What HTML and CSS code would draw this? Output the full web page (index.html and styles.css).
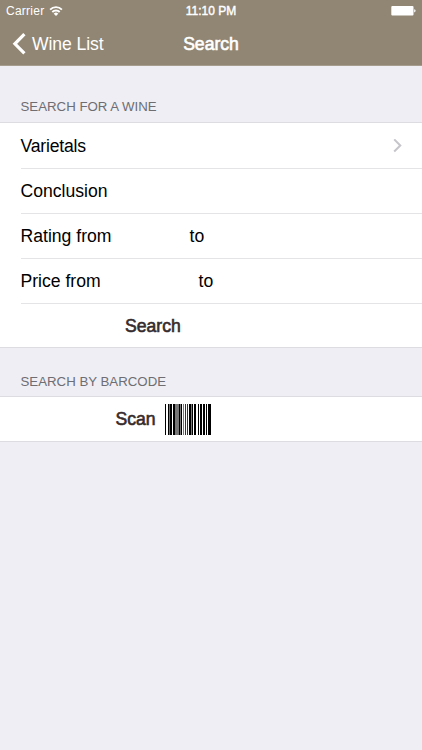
FILE: index.html
```html
<!DOCTYPE html>
<html lang="en">
<head>
<meta charset="utf-8">
<title>Search</title>
<link rel="stylesheet" href="styles.css">
</head>
<body>
<header class="top">
  <div class="status">
    <div class="carrier"><span>Carrier</span>
      <svg class="wifi" width="14" height="11" viewBox="0 0 14 11"><g fill="none" stroke="#fff" stroke-width="1.9"><path d="M1.1 3.6a8.3 8.3 0 0 1 11.8 0"/><path d="M3.3 6a5.2 5.2 0 0 1 7.4 0"/></g><path fill="#fff" d="M4.7 7.7a3.2 3.2 0 0 1 4.6 0L7 10z"/></svg>
    </div>
    <span class="clock">11:10 PM</span>
    <svg class="battery" width="26" height="12" viewBox="0 0 26 12"><rect x="1.3" y="1" width="22.2" height="9.6" rx="1" fill="#fff"/><path d="M24.2 4.2q1.4.4 1.4 1.6t-1.4 1.6z" fill="#fff"/></svg>
  </div>
  <nav class="nav">
    <a class="back"><svg width="14" height="22" viewBox="0 0 14 22"><path d="M12.4 1.2 2.9 10.8 12.4 20.4" fill="none" stroke="#fff" stroke-width="3.2"/></svg><span>Wine List</span></a>
    <h1 class="title">Search</h1>
  </nav>
</header>
<main>
  <h2 class="heading first">SEARCH FOR A WINE</h2>
  <section class="group">
    <div class="row tall"><span class="varietals">Varietals</span><svg class="chevron" width="9" height="14" viewBox="0 0 9 14"><path d="M1.2 .4 7.3 6.5l-6.1 6" fill="none" stroke="#c5c5ca" stroke-width="2"/></svg></div>
    <div class="row"><span>Conclusion</span></div>
    <div class="row"><span class="rating">Rating from</span><span>to</span></div>
    <div class="row"><span class="price">Price from</span><span>to</span></div>
    <div class="row button search">Search</div>
  </section>
  <h2 class="heading second">SEARCH BY BARCODE</h2>
  <section class="group">
    <div class="row button scan"><span>Scan</span>
      <svg class="barcode" width="46" height="31" viewBox="0 0 46 31"><path d="M0 0h1v31H0zM3 0h1v31H3zM5 0h2v31H5zM8 0h2v31H8zM14 0h1v31h-1zM16 0h1v31h-1zM24 0h2v31h-2zM27 0h1v31h-1zM29 0h2v31h-2zM33 0h1v31h-1zM35 0h2v31h-2zM38 0h2v31h-2zM41 0h1v31h-1zM43 0h3v31h-3z"/><path fill="#777" d="M4 0h1v31H4zM10 0h4v31h-4zM15 0h1v31h-1zM18 0h1v31h-1zM26 0h1v31h-1z"/><path fill="#333" d="M20 0h1v31h-1zM22 0h1v31h-1z"/></svg>
    </div>
  </section>
</main>
</body>
</html>
```
FILE: styles.css
```css
* { box-sizing: border-box; }
body {
  margin: 0;
  height: 750px;
  background: #efeef4;
  color: #000;
  font: 17.6px/20px "Liberation Sans", Arial, sans-serif;
  overflow: hidden;
}
svg { display: block; flex: none; }
.top { height: 66px; background: #918673; color: #fff; border-bottom: 1px solid #a69d8f; }
.status {
  height: 22px;
  display: grid;
  grid-template-columns: 1fr auto 1fr;
  align-items: center;
  padding: 0 6px;
  font-size: 12px;
}
.carrier { display: flex; align-items: center; gap: 5px; letter-spacing: .25px; }
.clock { -webkit-text-stroke: .4px; letter-spacing: 0; }
.battery { justify-self: end; }
.nav {
  height: 43px;
  display: grid;
  grid-template-columns: 1fr auto 1fr;
  align-items: center;
  padding: 0 12px;
}
.back { display: flex; align-items: center; gap: 6px; letter-spacing: -.1px; }
.title { margin: 0; font-size: 17.6px; line-height: 20px; font-weight: 400; -webkit-text-stroke: .6px; }
.heading { margin: 0; padding-left: 20.5px; font-size: 13.25px; line-height: 16px; font-weight: 400; color: #6d6d72; }
.first { height: 56px; padding-top: 33px; }
.second { height: 48px; padding-top: 26px; }
.group { background: #fff; border-top: 1px solid #dddce1; border-bottom: 1px solid #dddce1; }
.row { display: flex; align-items: center; height: 45px; margin-left: 20.5px; border-bottom: 1px solid #e4e4e6; }
.tall { height: 46px; }
.varietals { letter-spacing: -.2px; }
.row:last-child { border-bottom: 0; height: 43px; }
.chevron { margin-left: auto; margin-right: 20px; }
.rating { width: 169px; }
.price { width: 178px; }
.button { color: #372b2b; -webkit-text-stroke: .6px; }
.search { padding-left: 104.5px; }
.row.scan { height: 44px; padding-left: 95px; }
.scan span { margin-top: -1px; }
.barcode { margin-left: 9.5px; -webkit-text-stroke: 0; }
```
